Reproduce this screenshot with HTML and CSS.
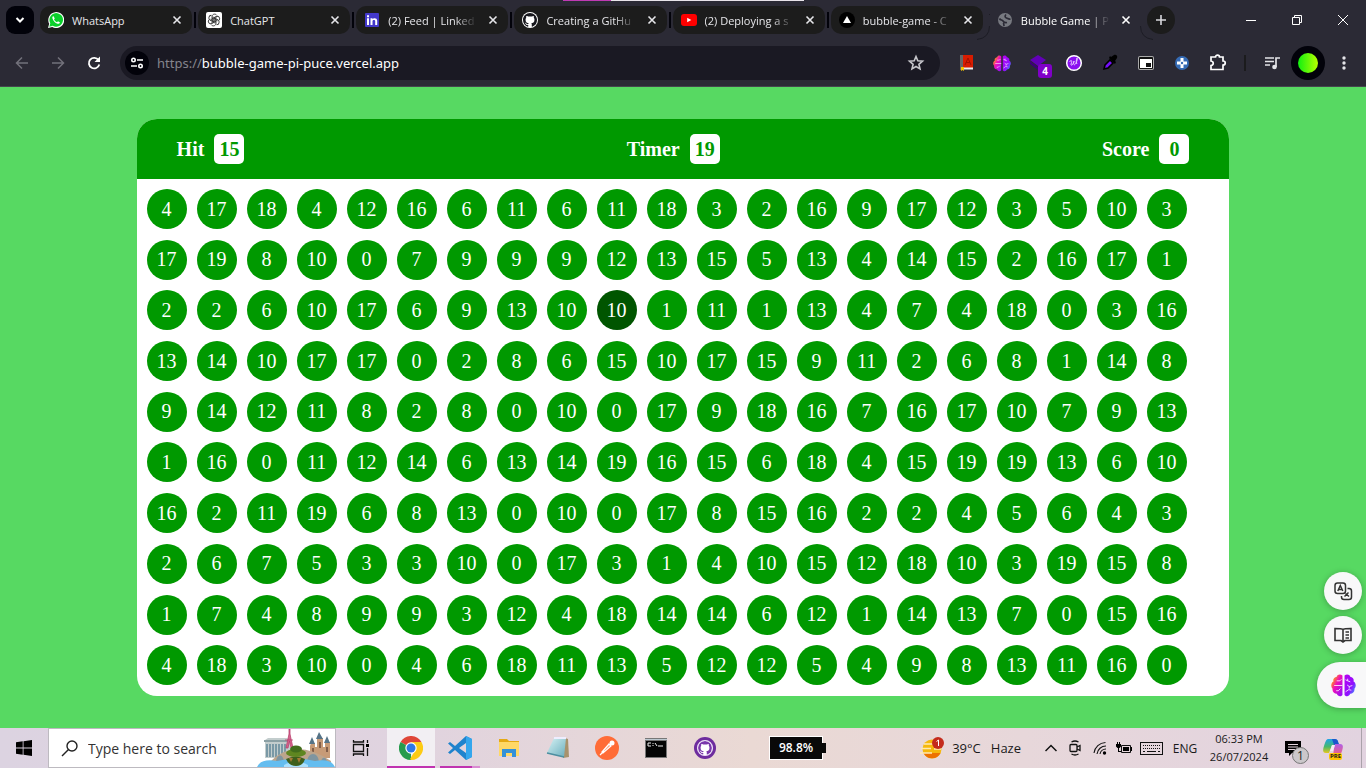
FILE: index.html
```html
<!DOCTYPE html>
<html lang="en">
<head>
<meta charset="utf-8">
<title>Bubble Game</title>
<link rel="stylesheet" href="styles.css">
</head>
<body>
<svg class="defs" aria-hidden="true">
  <defs>
    <linearGradient id="brainL" x1="0" y1="0" x2="1" y2="1"><stop offset="0" stop-color="#ffc400"/><stop offset=".2" stop-color="#ff8a20"/><stop offset=".45" stop-color="#f010b8"/><stop offset="1" stop-color="#8a10ff"/></linearGradient>
    <linearGradient id="brainR" x1="0" y1="0" x2="1" y2="1"><stop offset="0" stop-color="#b800f0"/><stop offset=".6" stop-color="#9010ff"/><stop offset="1" stop-color="#20c0ff"/></linearGradient>
    <linearGradient id="page" x1="0" y1="0" x2="1" y2="1"><stop offset="0" stop-color="#d8f3f5"/><stop offset="1" stop-color="#6aaebd"/></linearGradient>
    <linearGradient id="coL" x1="0" y1="0" x2="0" y2="1"><stop offset="0" stop-color="#1fa3e8"/><stop offset=".55" stop-color="#46b86a"/><stop offset="1" stop-color="#e6c81e"/></linearGradient>
    <linearGradient id="coR" x1="0" y1="0" x2="0" y2="1"><stop offset="0" stop-color="#b060e8"/><stop offset="1" stop-color="#f0607c"/></linearGradient>
    <symbol id="close" viewBox="0 0 10 10"><path d="M1.500 1.500l7 7M8.500 1.500l-7 7" stroke="currentColor" stroke-width="1.600" fill="none"/></symbol>
    <symbol id="octo" viewBox="0 0 16 16"><path d="M8 0C3.580 0 0 3.580 0 8c0 3.540 2.290 6.530 5.470 7.590.4.07.55-.17.55-.38 0-.19-.01-.82-.01-1.490-2.010.37-2.530-.49-2.690-.94-.09-.23-.48-.94-.82-1.130-.28-.15-.68-.52-.01-.53.63-.01 1.080.58 1.230.82.72 1.210 1.870.87 2.330.66.07-.52.28-.87.51-1.070-1.780-.2-3.640-.89-3.640-3.950 0-.87.31-1.590.82-2.150-.08-.2-.36-1.020.08-2.120 0 0 .67-.21 2.200.82.64-.18 1.320-.27 2-.27s1.360.09 2 .27c1.530-1.040 2.200-.82 2.200-.82.44 1.100.16 1.920.08 2.120.51.56.82 1.270.82 2.150 0 3.070-1.870 3.750-3.650 3.950.29.25.54.73.54 1.480 0 1.070-.01 1.930-.01 2.200 0 .21.15.46.55.38A8.010 8.010 0 0 0 16 8c0-4.420-3.580-8-8-8z" fill="currentColor"/></symbol>
    <symbol id="brain" viewBox="0 0 24 22">
      <path d="M11 1.500C9-.5 6 .5 5.500 2.500 3 3 1.500 5 2.500 7 0 8.500-.5 12 1.500 14c-.5 3 1.500 5 4 5 1 2.500 4 3 5.500 1z" fill="url(#brainL)"/>
      <path d="M13 1.500c2-2 5-1 5.500 1 2.500.5 4 2.500 3 4.500 2.500 1.500 3 5 1 7 .5 3-1.500 5-4 5-1 2.500-4 3-5.500 1z" fill="url(#brainR)"/>
      <path d="M3 11h8M5.500 6.500h3l1.500-1.500M5 16h2l2-2M14 5.500l2 1 2.500 1M16 6.500v-2M15.500 10.500l2 1.500 3-1M17.500 12v2M14 17l3-2 2.500.5" stroke="#fff" stroke-opacity=".85" stroke-width=".9" fill="none"/>
    </symbol>
  </defs>
</svg>

<header class="browser">
  <div class="tabstrip">
    <div class="load-line"></div>
    <button class="tab-search" aria-label="Search tabs"><svg width="12" height="12" viewBox="0 0 12 12"><path d="M2.500 4l3.500 3.500L9.500 4" stroke="#fff" stroke-width="2" fill="none"/></svg></button>
    <nav class="tabs" aria-label="Tabs">
      <div class="tab">
        <svg class="fav" viewBox="0 0 16 16"><path d="M0 16l1.200-4.200A8 8 0 1 1 4.300 15z" fill="#fff"/><path d="M1.300 14.700l1-3.400a6.800 6.800 0 1 1 2.500 2.500z" fill="#0bd02c"/><path d="M5.300 4c-.8.4-1.200 1.400-.8 2.500.8 2.500 2.600 4.400 5 5.200 1.200.4 2.200-.2 2.500-1.300l-2-1.200-1 1C7.500 9.600 6.500 8.600 6 7.200l.8-.8z" fill="#fff"/></svg>
        <span class="title">WhatsApp</span><button class="x" aria-label="Close WhatsApp"><svg><use href="#close"/></svg></button>
      </div>
      <div class="tab">
        <svg class="fav" viewBox="0 0 16 16"><rect width="16" height="16" rx="2" fill="#fff"/><g fill="none" stroke="#333" stroke-width=".9"><path id="petal" d="M6 9.200V4.700C6 2 9.500 1.200 10.800 3.400M8 6.800l3.500 2"/><use href="#petal" transform="rotate(60 8 8)"/><use href="#petal" transform="rotate(120 8 8)"/><use href="#petal" transform="rotate(180 8 8)"/><use href="#petal" transform="rotate(240 8 8)"/><use href="#petal" transform="rotate(300 8 8)"/></g></svg>
        <span class="title">ChatGPT</span><button class="x" aria-label="Close ChatGPT"><svg><use href="#close"/></svg></button>
      </div>
      <div class="tab">
        <svg class="fav" viewBox="0 0 16 16"><rect x="1" y="1" width="14" height="14" rx="1" fill="#4338ca"/><path d="M3 6.200h2V13H3zM3 3.200h2v2H3zM6.500 6.200h2v1c1-1.600 4.700-1.600 4.700 1.600V13h-2V9.300c0-1.900-2.700-1.800-2.700 0V13h-2z" fill="#fff"/></svg>
        <span class="title fade">(2) Feed | Linked</span><button class="x" aria-label="Close LinkedIn"><svg><use href="#close"/></svg></button>
      </div>
      <div class="tab">
        <svg class="fav" viewBox="0 0 16 16"><circle cx="8" cy="8" r="8" fill="#fff"/><g color="#17171d" transform="translate(1 1)"><use href="#octo" width="14" height="14"/></g></svg>
        <span class="title fade">Creating a GitHu</span><button class="x" aria-label="Close GitHub"><svg><use href="#close"/></svg></button>
      </div>
      <div class="tab">
        <svg class="fav" viewBox="0 0 16 16"><rect y="2" width="16" height="12" rx="3" fill="#f00"/><path d="M6.200 5.700v4.600L10.300 8z" fill="#fff"/></svg>
        <span class="title fade">(2) Deploying a s</span><button class="x" aria-label="Close YouTube"><svg><use href="#close"/></svg></button>
      </div>
      <div class="tab">
        <svg class="fav" viewBox="0 0 16 16"><circle cx="8" cy="8" r="8" fill="#000"/><path d="M8 4l4 7H4z" fill="#fff"/></svg>
        <span class="title fade">bubble-game - C</span><button class="x" aria-label="Close bubble-game"><svg><use href="#close"/></svg></button>
      </div>
      <div class="tab active">
        <svg class="edge left" width="14" height="34"><path d="M0 33.500Q12.500 32 12.500 20M12.500 9V8" stroke="#1c1c24" fill="none"/></svg>
        <svg class="fav" viewBox="0 0 16 16"><circle cx="8" cy="8" r="7" fill="#777980"/><path d="M2.500 6.500c1 2 2.500 1 3.500 2.500s1.500 2 4 1.500M9 2.500C7.500 4 8 5.500 9.500 6s2 1.500 4 1M6 11c1 .5 1 2 1 3" stroke="#2b2a35" stroke-width="1.700" fill="none"/></svg>
        <span class="title fade">Bubble Game | P</span><button class="x" aria-label="Close Bubble Game"><svg><use href="#close"/></svg></button>
        <svg class="edge right" width="14" height="34"><path d="M14 33.500Q1.500 32 1.500 20" stroke="#1c1c24" fill="none"/></svg>
      </div>
    </nav>
    <button class="new-tab" aria-label="New tab"><svg width="12" height="12" viewBox="0 0 12 12"><path d="M6 1v10M1 6h10" stroke="#d8d8dc" stroke-width="1.600"/></svg></button>
    <div class="window-buttons">
      <button aria-label="Minimize"><svg width="12" height="12"><path d="M1 6.500h10" stroke="#fff"/></svg></button>
      <button aria-label="Restore"><svg width="12" height="12"><path d="M1.500 3.500h7v7h-7zM3.500 3.500v-2h7v7h-2" stroke="#fff" fill="none"/></svg></button>
      <button aria-label="Close window"><svg width="12" height="12"><path d="M1 1l10 10M11 1L1 11" stroke="#fff"/></svg></button>
    </div>
  </div>

  <div class="toolbar">
    <div class="nav-buttons">
      <button aria-label="Back"><svg width="16" height="16"><path d="M14 8H3M8 2.500L2.500 8 8 13.500" stroke="#72717b" stroke-width="1.500" fill="none"/></svg></button>
      <button aria-label="Forward"><svg width="16" height="16"><path d="M2 8h11M8 2.500L13.500 8 8 13.500" stroke="#72717b" stroke-width="1.500" fill="none"/></svg></button>
      <button aria-label="Reload"><svg width="16" height="16"><path d="M12.500 5A5.300 5.300 0 1 0 13.300 9.500" stroke="#fff" stroke-width="1.800" fill="none"/><path d="M14 1.500V7H8.500z" fill="#fff"/></svg></button>
    </div>
    <div class="omnibox">
      <button class="site-info" aria-label="Site information"><svg width="14" height="14"><g stroke="#fff" stroke-width="1.600" fill="none"><circle cx="3.500" cy="4" r="1.700"/><path d="M7 4h6M1 10h6"/><circle cx="10.500" cy="10" r="1.700"/></g></svg></button>
      <a class="url" href="#"><span class="scheme">https://</span>bubble-game-pi-puce.vercel.app</a>
      <button class="star" aria-label="Bookmark"><svg width="18" height="18" viewBox="0 0 18 18"><path d="M9 2.500l1.800 4.300 4.700.4-3.600 3.100 1.100 4.600L9 12.500l-4 2.400 1.100-4.600-3.600-3.100 4.700-.4z" stroke="#c6c6cb" stroke-width="1.600" fill="none"/></svg></button>
    </div>
    <div class="extensions">
      <button aria-label="Dictionary"><svg width="16" height="18" viewBox="0 0 16 18"><path d="M2 1h3v15H2z" fill="#666"/><path d="M5 1h10v13H5z" fill="#d81c00"/><path d="M7 11l3-7 3 7M8 8.500h4" stroke="#a01000" fill="none"/><path d="M5 13.500h10v2H5z" fill="#eee"/><path d="M3 13h3v4l-1.500-1L3 17z" fill="#f5c400"/></svg></button>
      <button aria-label="Brain"><svg width="18" height="17"><use href="#brain"/></svg></button>
      <button class="badged" aria-label="Layers, 4"><svg width="18" height="18"><path d="M9 1l8 5-8 6-8-6z" fill="#6200b8"/><path d="M1 7l8 6 4-3v4l-4 2-8-6z" fill="#3d0078"/></svg><span class="badge">4</span></button>
      <button aria-label="Writer"><svg width="18" height="18"><circle cx="9" cy="9" r="7.300" fill="#8a10f0" stroke="#fff" stroke-width="1.500"/><path d="M4.500 8c2-3 3-1 1.500 2 0 3 2.500 0 3-3-1 4 .5 5 2 2 1-2 1.500-4 1-5-1 2-1 5 0 6" stroke="#e8c8ff" stroke-width="1" fill="none"/></svg></button>
      <button aria-label="Colour picker"><svg width="18" height="18"><path d="M3 15l1-4 5-5 3 3-5 5z" stroke="#000" stroke-width="1.600" fill="#7410f8"/><path d="M8 4l6 6 1-2-1-1 2-3c1-2-1-4-3-3l-3 2-1-1z" fill="#000"/></svg></button>
      <button aria-label="Picture in picture"><svg width="18" height="18"><rect x="1" y="2" width="16" height="14" rx="2" fill="#aaa"/><rect x="2" y="3" width="14" height="12" rx="1" fill="#111"/><path d="M3 5h12v9H3z" fill="#fff"/><path d="M9 9h5v4H9z" fill="#111"/></svg></button>
      <button aria-label="Controller"><svg width="16" height="16"><circle cx="8" cy="8" r="7" fill="#356bb5"/><path d="M6.500 3h3v3.500H13v3H9.500V13h-3V9.500H3v-3h3.500z" fill="#fff"/><circle cx="8" cy="8" r="1.200" fill="#356bb5"/></svg></button>
      <button aria-label="Extensions"><svg width="18" height="18"><path d="M2 3h4.500c0-2.500 4-2.500 4 0H14v4c3 0 3 4 0 4v4.500H2v-4c3-.5 3-4 0-4.500z" stroke="#fff" stroke-width="1.700" fill="none"/></svg></button>
    </div>
    <div class="menu-buttons">
      <button aria-label="Media controls"><svg width="16" height="16"><path d="M1 3h9M1 6.500h9M1 10h5M12 12V3h4" stroke="#e4e4e8" stroke-width="1.700" fill="none"/><circle cx="10.500" cy="12" r="2.300" fill="#e4e4e8"/></svg></button>
      <button class="avatar" aria-label="Profile"><span></span></button>
      <button aria-label="Menu"><svg width="4" height="16"><g fill="#e4e4e8"><circle cx="2" cy="3" r="1.700"/><circle cx="2" cy="8" r="1.700"/><circle cx="2" cy="13" r="1.700"/></g></svg></button>
    </div>
  </div>
</header>

<main class="page">
  <section class="panel">
    <div class="scorebar">
      <h2>Hit <span class="value">15</span></h2>
      <h2>Timer <span class="value">19</span></h2>
      <h2>Score <span class="value">0</span></h2>
    </div>
    <div class="bubbles" id="bubbles"></div>
  </section>
  <aside class="floating">
    <button class="round" aria-label="Translate"><svg width="20" height="20"><g stroke="#333" stroke-width="1.500" fill="none"><rect x="2" y="2" width="10.500" height="10.500" rx="2.500"/><path d="M4.800 10l2.500-5.500L9.800 10M5.800 8.500h3M14.500 7.500h1.500a2.500 2.500 0 0 1 2.500 2.500v6a2.500 2.500 0 0 1-2.500 2.500h-5A2.500 2.500 0 0 1 8.500 16v-1M11.500 15.500l4-4M12.500 12.500l3.500 3"/></g></svg></button>
    <button class="round" aria-label="Read"><svg width="20" height="20"><path d="M10 4.500C9 3.500 7 3.500 2 3.500v12h6l2 1.500 2-1.500h6v-12c-5 0-7 0-8 1zM10 4.500V17M12.500 7H16M12.500 10H16M12.500 13H16" stroke="#333" stroke-width="1.600" fill="none"/></svg></button>
    <button class="brain-tab" aria-label="Assistant"><svg width="25" height="23"><use href="#brain"/></svg></button>
  </aside>
</main>

<footer class="taskbar">
  <button class="start" aria-label="Start"><svg width="16" height="16"><path d="M0 2.300L6.700 1.300V7.600H0zM7.500 1.200L16 0v7.600H7.500zM0 8.400h6.700v6.300L0 13.700zM7.500 8.400H16V16l-8.500-1.200z"/></svg></button>
  <label class="search">
    <svg width="18" height="18"><circle cx="11" cy="7" r="5" stroke="#222" stroke-width="1.400" fill="none"/><path d="M7.500 10.500L1 17" stroke="#222" stroke-width="1.400"/></svg>
    <input type="text" placeholder="Type here to search" aria-label="Search">
    <svg class="scene" width="78" height="38" viewBox="0 0 78 38">
      <path d="M8 11l3-2h19l3 2v18H8z" fill="#c3cdcd"/><path d="M7 11h26v2H7z" fill="#8ba0a4"/><path d="M10 15v13M13 15v13M16 15v13M19 15v13M22 15v13M25 15v13M28 15v13" stroke="#5c8496" stroke-width="1.400"/>
      <path d="M32 0v5l-3 14h2l1.500-7 1.500 7h2L33 5V0zM28 11h8" stroke="#b9416f" stroke-width=".8" fill="#d6638c"/>
      <path d="M53 17l1-3h4v4h2V9h6v9h2v-5h5v16H53z" fill="#c79b77"/><path d="M52 15l3-7 3 7zM59 10l3-7 4 7zM67 14l3-7 3 7z" fill="#557387"/>
      <path d="M56 19v5M63 13v6M70 18v5" stroke="#6b4b3b" stroke-width="1.500"/>
      <path d="M14 32Q38 8 74 32v4H14z" fill="#bda58c"/><path d="M19 34c0-10 8-10 8 0M50 34c0-12 12-12 12 0M64 34c0-7 6-7 6 0" fill="#7f95a0"/>
      <path d="M0 38Q4 29 20 32q20-5 38 0 16-3 20 6z" fill="#64bdf0"/><path d="M27 36q12-7 24 0v2H27z" fill="#a9e0ff"/>
      <path d="M29 30q10-5 19 0-2 7-9 7t-10-7z" fill="#3f5f1c"/><ellipse cx="39" cy="24" rx="10" ry="4" fill="#5f8620"/><ellipse cx="39" cy="20" rx="6" ry="3.500" fill="#426d1c"/><path d="M32 29l2 4 2-4M40 29l2 5 2-5" fill="#a77a35"/>
    </svg>
  </label>
  <button class="taskview" aria-label="Task view"><svg width="18" height="16"><g stroke="#111" stroke-width="1.300" fill="none"><path d="M1.500 4.500h10v7h-10zM1.500 0v2h10V0M1.500 16v-2h10v2M15.500 0v3M15.500 8v8"/></g><path d="M14 4h3v3h-3z"/></svg></button>
  <nav class="apps" aria-label="Applications">
    <button class="current" aria-label="Chrome"><svg width="24" height="24"><path d="M12 12L1.600 6A12 12 0 0 1 22.400 6z" fill="#df4637"/><path d="M12 12V24A12 12 0 0 1 1.600 6z" fill="#279b4d"/><path d="M12 6h10.400A12 12 0 0 1 12 24l-1-1 6-10z" fill="#fdcb14"/><circle cx="12" cy="12" r="5.700" fill="#fff"/><circle cx="12" cy="12" r="4.500" fill="#2f78e5"/></svg></button>
    <button class="open" aria-label="Visual Studio Code"><svg width="24" height="24"><path d="M18 0l6 3v18l-6 3L7 14l-5 4-2-1.500L5 12 0 7.500 2 6l5 4zM18 7l-7 5 7 5z" fill="#1f83cd" fill-rule="evenodd"/><path d="M18 0l6 3v18l-6 3z" fill="#34a6ed"/></svg></button>
    <button aria-label="File Explorer"><svg width="22" height="20"><path d="M1 1h8l2 2h10v15H1z" fill="#e5a913"/><path d="M1 4h20v14H1z" fill="#ffd866"/><path d="M4 19v-8h14v8h-4v-4H8v4z" fill="#3491d8"/></svg></button>
    <button aria-label="Notepad"><svg width="24" height="24"><path d="M19 2l3 1 1 18-6 1z" fill="#a8926c"/><path d="M8 2h12l-2 19-17-4z" fill="url(#page)"/><path d="M8 2h12" stroke="#eef" stroke-width="2"/><path d="M1 17l17 4" stroke="#4d8fa0" stroke-width="1.500"/></svg></button>
    <button aria-label="Postman"><svg width="24" height="24"><circle cx="12" cy="12" r="12" fill="#ff6c37"/><path d="M7 16l7-8 2 2-8 7zM5 19l4-4" stroke="#fff" stroke-width="1.200" fill="#ffa585"/><circle cx="17" cy="7" r="2.500" fill="#fff"/></svg></button>
    <button aria-label="Command Prompt"><svg width="22" height="20"><path d="M0 0h22v20H0z" fill="#777"/><path d="M1 3h20v16H1z" fill="#050505"/><path d="M0 1h22v1H0z" fill="#bbc8d0"/><path d="M6 5H3v3h3M8 5v1M8 7v1M10 5l2 3M13 8h5" stroke="#eee" fill="none"/></svg></button>
    <button aria-label="GitHub Desktop"><svg width="24" height="24"><circle cx="12" cy="12" r="11" fill="#6d2c9e"/><circle cx="12" cy="12" r="7.500" fill="#fff"/><g color="#7a38ac" transform="translate(5 5)"><use href="#octo" width="14" height="14"/></g><circle cx="12" cy="12" r="7.500" fill="none" stroke="#eadcf5" stroke-width="1.200"/></svg></button>
  </nav>
  <div class="charge">98.8%</div>
  <button class="weather"><svg width="24" height="22"><circle cx="12" cy="12" r="9.500" fill="#f5b80c"/><path d="M3.500 16h17a9.500 9.500 0 0 1-17 0z" fill="#ed7200"/><path d="M4 7h9M1 11.500h10M14 12h7M0 16h12" stroke="#ffe9b0" stroke-width="1.400"/><circle cx="18" cy="6" r="6" fill="#c42b1c"/><path d="M16.500 4.500l2-1.500v6" stroke="#fff" fill="none"/></svg><span>39°C</span><span>Haze</span></button>
  <div class="tray">
    <button aria-label="Show hidden icons"><svg width="12" height="8"><path d="M.5 7L6 1.500 11.500 7" stroke="#111" stroke-width="1.500" fill="none"/></svg></button>
    <button aria-label="Camera"><svg width="12" height="16"><g stroke="#111" stroke-width="1.300" fill="none"><rect x="1" y="4.500" width="7" height="7" rx="1"/><path d="M8 7l3-1.500v5L8 9M2.500 2Q6 0 9.500 2M2.500 14Q6 16 9.500 14"/></g></svg></button>
    <button class="wifi" aria-label="Network"><svg width="14" height="14"><g stroke="#111" stroke-width="1.100" fill="none"><path d="M1 12A12 12 0 0 1 12.500 1.500M4 13A9 9 0 0 1 13 5M7 13a6 6 0 0 1 6-5"/></g><circle cx="11.500" cy="12" r="1.700"/></svg></button>
    <button class="power" aria-label="Power"><svg width="16" height="12"><path d="M5.500 3.500h9v7h-9z" stroke="#111" fill="none"/><path d="M7 5h6v4H7zM15 5h1v4h-1z"/><path d="M0 2h5v2.500L3.500 6h-2L0 4.500zM1 0h1v2H1zM3 0h1v2H3zM2 6h1v4H2zM2 9h3v1H2z"/></svg></button>
    <button class="keyboard" aria-label="Touch keyboard"><svg width="23" height="13"><rect x=".5" y=".5" width="22" height="12" stroke="#111" fill="none"/><path d="M3 3.500h17M3 6.500h17" stroke="#111" stroke-dasharray="1 1"/><path d="M3 9.500h2M7 9.500h9M18 9.500h2" stroke="#111"/></svg></button>
    <button class="lang">ENG</button>
    <button class="clock"><time>06:33 PM</time><time>26/07/2024</time></button>
    <button class="notes" aria-label="Notifications"><svg width="16" height="15"><path d="M0 0h16v12H7l-3 3v-3H0z"/><path d="M3 3.500h10M3 6h10M3 8.500h7" stroke="#e4d4dc" stroke-width="1.200"/></svg><span class="count">1</span></button>
    <button class="copilot" aria-label="Copilot"><svg width="20" height="18"><path d="M5 1h7c3 0 3 4 4 6H9L6 15H3c-4 0-3-4-2-7S3 1 5 1z" fill="url(#coL)"/><path d="M9 1h3c3 0 3 3 4 5l-5 1z" fill="#1b57cc"/><path d="M12 6h5c4 0 3 4 2 7s-2 4-4 4H9c2 0 1-3 3-11z" fill="url(#coR)"/><path d="M9 7h3l-2 6H7z" fill="#f4ecf4"/></svg><span class="pre">PRE</span></button>
  </div>
  <button class="show-desktop" aria-label="Show desktop"></button>
</footer>
<script src="bubbles.js"></script>
</body>
</html>
```
FILE: styles.css
```css
* { box-sizing: border-box; }
body {
  margin: 0;
  height: 100vh;
  display: flex;
  flex-direction: column;
  overflow: hidden;
  font-family: "Open Sans", "Noto Sans", sans-serif;
  font-size: 12px;
}
button {
  border: 0;
  padding: 0;
  background: none;
  color: inherit;
  font: inherit;
  display: flex;
  align-items: center;
  justify-content: center;
  flex: none;
}
svg { flex: none; display: block; }
.defs { position: absolute; width: 0; height: 0; }

/* Browser chrome */
.browser { background: #2b2a35; color: #e6e6ea; border-bottom: 1px solid #45454d; }
.tabstrip { position: relative; display: flex; align-items: center; height: 40px; padding-left: 6px; }
.load-line {
  position: absolute;
  top: 0;
  left: 563px;
  width: 241px;
  height: 1px;
  background: linear-gradient(90deg, #c03ab4 20%, #e8e4ea 20%);
}
.tab-search { width: 28px; height: 28px; border-radius: 9px; background: #02020a; margin-right: 6px; }
.tabs { display: flex; min-width: 0; flex: 0 1 1107px; font-size: 11px; font-weight: 500; }
.tab {
  position: relative;
  display: flex;
  align-items: center;
  gap: 8px;
  flex: 1 1 0;
  min-width: 0;
  height: 28px;
  margin-right: 6px;
  padding: 0 7px 0 8px;
  border-radius: 10px;
  background: #1c1c1c;
}
.tab::after { content: ""; position: absolute; right: -4px; top: 6px; width: 2px; height: 16px; background: #02020a; }
.tab.active { background: none; color: #fff; }
.tab.active::after, .tab:nth-last-child(2)::after { display: none; }
.edge { position: absolute; top: 0; }
.edge.left { left: -12px; }
.edge.right { right: -12px; }
.fav { width: 16px; height: 16px; }
.title {
  flex: 1;
  min-width: 0;
  white-space: nowrap;
}
.fade { mask-image: linear-gradient(90deg, #000 75%, transparent); }
.x { width: 16px; height: 16px; }
.x svg { width: 10px; height: 10px; }
.new-tab { width: 28px; height: 28px; border-radius: 50%; background: #1c1c1c; }
.window-buttons { display: flex; margin-left: auto; }
.window-buttons button { width: 46px; height: 40px; }

.toolbar { display: flex; align-items: center; height: 46px; }
.nav-buttons { display: flex; padding: 0 8px 0 4px; }
.nav-buttons button { width: 36px; height: 34px; }
.omnibox { display: flex; align-items: center; flex: 1; height: 34px; padding: 0 15px 0 5px; border-radius: 17px; background: #1a1923; }
.site-info { width: 24px; height: 24px; border-radius: 50%; background: #02020a; }
.url { flex: 1; margin-left: 8px; color: #fff; font-family: "Noto Sans", "Open Sans", sans-serif; font-size: 13px; text-decoration: none; }
.scheme { color: #85858d; }
.extensions { display: flex; align-items: center; margin-left: 8px; padding-right: 8px; border-right: 2px solid #1b1b1d; height: 16px; }
.extensions button { width: 36px; height: 36px; }
.badged { position: relative; }
.badge {
  position: absolute;
  right: 4px;
  bottom: 3px;
  width: 14px;
  height: 14px;
  border-radius: 3px;
  background: #8000c8;
  color: #fff;
  font-size: 10px;
  line-height: 14px;
  font-weight: 700;
}
.menu-buttons { display: flex; align-items: center; padding-right: 4px; }
.menu-buttons button { width: 36px; height: 34px; }
.menu-buttons button:first-child { margin-left: 8px; }
.menu-buttons .avatar { width: 34px; border-radius: 50%; background: #02020a; margin: 0 1px; }
.avatar span { width: 20px; height: 20px; border-radius: 50%; background: linear-gradient(90deg, #10f010, #b8ff00); }

/* Game */
.page {
  position: relative;
  flex: 1;
  min-height: 0;
  display: flex;
  align-items: center;
  justify-content: center;
  background: #57d962;
  font-family: "Liberation Serif", "Times New Roman", serif;
  font-size: 20px;
}
.panel { width: 80%; height: 90%; display: flex; flex-direction: column; border-radius: 20px; overflow: hidden; background: #fff; }
.scorebar { display: flex; align-items: center; justify-content: space-between; height: 60px; padding: 0 40px; background: #009900; color: #fff; flex: none; }
.scorebar h2 { display: flex; align-items: center; gap: 10px; margin: 0; font-size: 20px; }
.value { padding: 0 5px; min-width: 30px; line-height: 30px; text-align: center; border-radius: 5px; background: #fff; color: #009900; }
.bubbles { flex: 1; display: flex; flex-wrap: wrap; align-content: stretch; align-items: flex-start; gap: 10px; padding: 10px; }
.bubble { width: 40px; height: 40px; border-radius: 50%; background: #009900; color: #fff; }
.bubble.hover { background: #005500; }

.floating { position: absolute; right: 0; bottom: 20px; display: flex; flex-direction: column; align-items: flex-end; gap: 6px; }
.floating button { background: #f8f8f9; box-shadow: 0 1px 6px #0004; }
.round { width: 38px; height: 38px; margin-right: 4px; border-radius: 50%; }
.floating .brain-tab { width: 49px; height: 46px; margin-top: 2px; padding-left: 4px; border-radius: 23px 0 0 23px; }

/* Taskbar */
.taskbar {
  display: flex;
  align-items: stretch;
  height: 40px;
  flex: none;
  color: #1a1a1a;
  background: linear-gradient(90deg, #dcd3e1, #e0d3df 30%, #ead9d4 55%, #e7d7da 75%, #e2d3e0);
}
.start { width: 48px; }
.search { display: flex; align-items: center; width: 288px; padding-left: 12px; border: 1px solid #bdbac0; background: #fff; overflow: hidden; }
.search input { flex: 1; min-width: 0; margin-left: 8px; padding: 0 0 0 1px; border: 0; outline: 0; background: none; font: inherit; font-size: 14px; color: #333; }
.search input::placeholder { color: #333; opacity: 1; }
.scene { align-self: flex-end; }
.taskview { width: 50px; }
.apps { display: flex; gap: 1px; }
.apps button { position: relative; width: 48px; }
.apps .current { background: #f2eff3; border-bottom: 2px solid #c033b0; padding-top: 2px; margin-left: 1px; }
.apps .open::after {
  content: "";
  position: absolute;
  left: 4px;
  right: 4px;
  bottom: 0;
  height: 2px;
  background: linear-gradient(90deg, #c033b0 80%, #d98cd2 80%);
}
.charge {
  position: relative;
  align-self: center;
  width: 54px;
  margin-left: 40px;
  border: 1px solid #fff;
  background: #090909;
  color: #fff;
  font-weight: 600;
  line-height: 22px;
  text-align: center;
}
.charge::after { content: ""; position: absolute; right: -4px; top: 6px; width: 4px; height: 10px; background: #090909; }
.weather { gap: 10px; margin-left: auto; padding-right: 18px; font-size: 13px; }
.weather svg { margin-right: -2px; }
.tray { display: flex; }
.tray button { position: relative; width: 24px; }
.tray .wifi { width: 26px; }
.tray .power { width: 22px; }
.tray .keyboard { width: 32px; }
.tray .lang { width: 36px; }
.tray .clock { width: 72px; flex-direction: column; font-size: 11px; line-height: 18px; }
.tray .notes { width: 36px; }
.tray .copilot { width: 44px; padding-bottom: 2px; }
.count {
  position: absolute;
  right: 2px;
  bottom: 4px;
  width: 17px;
  height: 17px;
  border: 1px solid #777;
  border-radius: 50%;
  background: #cbc7ca;
  line-height: 15px;
}
.pre { position: absolute; right: 13px; bottom: 8px; padding: 0 1px; border-radius: 2px; background: #ffc400; font-size: 6px; line-height: 7px; font-weight: 700; }
.show-desktop { width: 5px; margin-left: 6px; border-left: 1px solid #aaa2aa; }
```
FILE: bubbles.js
```js
const rows = [
  [4, 17, 18, 4, 12, 16, 6, 11, 6, 11, 18, 3, 2, 16, 9, 17, 12, 3, 5, 10, 3],
  [17, 19, 8, 10, 0, 7, 9, 9, 9, 12, 13, 15, 5, 13, 4, 14, 15, 2, 16, 17, 1],
  [2, 2, 6, 10, 17, 6, 9, 13, 10, 10, 1, 11, 1, 13, 4, 7, 4, 18, 0, 3, 16],
  [13, 14, 10, 17, 17, 0, 2, 8, 6, 15, 10, 17, 15, 9, 11, 2, 6, 8, 1, 14, 8],
  [9, 14, 12, 11, 8, 2, 8, 0, 10, 0, 17, 9, 18, 16, 7, 16, 17, 10, 7, 9, 13],
  [1, 16, 0, 11, 12, 14, 6, 13, 14, 19, 16, 15, 6, 18, 4, 15, 19, 19, 13, 6, 10],
  [16, 2, 11, 19, 6, 8, 13, 0, 10, 0, 17, 8, 15, 16, 2, 2, 4, 5, 6, 4, 3],
  [2, 6, 7, 5, 3, 3, 10, 0, 17, 3, 1, 4, 10, 15, 12, 18, 10, 3, 19, 15, 8],
  [1, 7, 4, 8, 9, 9, 3, 12, 4, 18, 14, 14, 6, 12, 1, 14, 13, 7, 0, 15, 16],
  [4, 18, 3, 10, 0, 4, 6, 18, 11, 13, 5, 12, 12, 5, 4, 9, 8, 13, 11, 16, 0]
];
const hovered = 51;
const box = document.getElementById("bubbles");
rows.flat().forEach((n, i) => {
  const b = document.createElement("button");
  b.className = i === hovered ? "bubble hover" : "bubble";
  b.textContent = n;
  box.append(b);
});
```
